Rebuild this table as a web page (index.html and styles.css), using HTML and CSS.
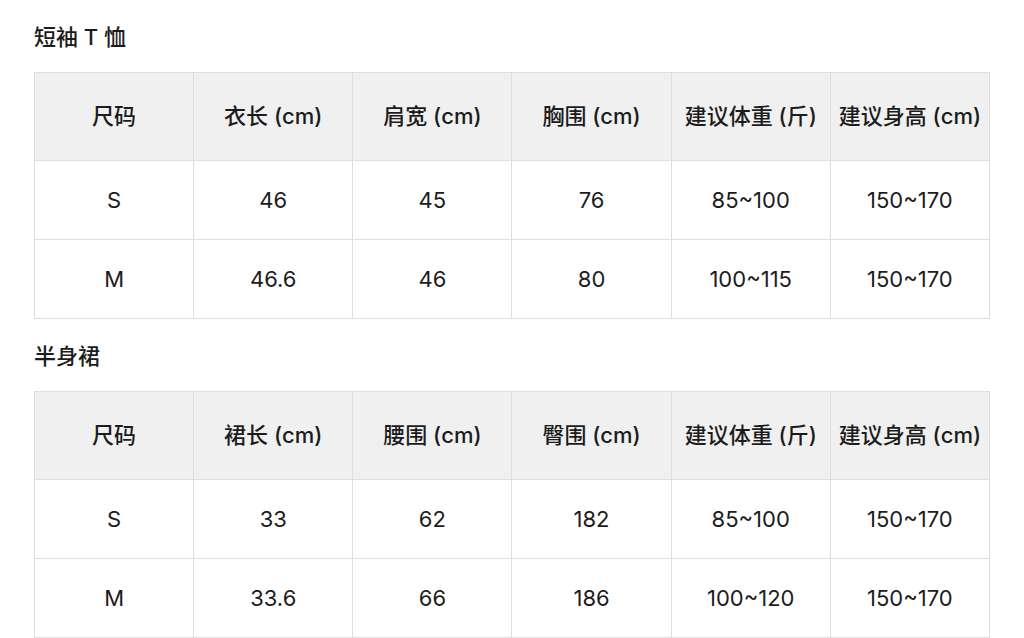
FILE: index.html
```html
<!DOCTYPE html>
<html lang="zh">
<head>
<meta charset="utf-8">
<link rel="stylesheet" href="styles.css">
</head>
<body>
<div class="page">
  <h2 class="title">短袖 T 恤</h2>
  <table class="size-table">
    <thead>
      <tr><th>尺码</th><th>衣长 (cm)</th><th>肩宽 (cm)</th><th>胸围 (cm)</th><th>建议体重 (斤)</th><th>建议身高 (cm)</th></tr>
    </thead>
    <tbody>
      <tr><td>S</td><td>46</td><td>45</td><td>76</td><td>85~100</td><td>150~170</td></tr>
      <tr><td>M</td><td>46.6</td><td>46</td><td>80</td><td>100~115</td><td>150~170</td></tr>
    </tbody>
  </table>
  <h2 class="title">半身裙</h2>
  <table class="size-table">
    <thead>
      <tr><th>尺码</th><th>裙长 (cm)</th><th>腰围 (cm)</th><th>臀围 (cm)</th><th>建议体重 (斤)</th><th>建议身高 (cm)</th></tr>
    </thead>
    <tbody>
      <tr><td>S</td><td>33</td><td>62</td><td>182</td><td>85~100</td><td>150~170</td></tr>
      <tr><td>M</td><td>33.6</td><td>66</td><td>186</td><td>100~120</td><td>150~170</td></tr>
    </tbody>
  </table>
</div>
</body>
</html>
```
FILE: styles.css
```css
html, body {
  margin: 0;
  padding: 0;
  background: #ffffff;
}
body {
  font-family: Inter, "Noto Sans CJK SC", sans-serif;
  color: #1c1c1c;
}
.page {
  padding: 0 34px;
  width: 956px;
}
.title {
  margin: 0;
  height: 72px;
  box-sizing: border-box;
  padding-bottom: 3px;
  display: flex;
  align-items: center;
  font-size: 22px;
  font-weight: 500;
  letter-spacing: 0;
}
.size-table {
  width: 956px;
  border-collapse: collapse;
  table-layout: fixed;
}
.size-table th,
.size-table td {
  border: 1px solid #dedede;
  text-align: center;
  font-size: 22px;
  padding: 0;
  letter-spacing: 0;
}
.size-table th {
  background: #f0f0f0;
  font-weight: 500;
  height: 88px;
  padding-bottom: 5px;
  box-sizing: border-box;
}
.size-table td {
  font-weight: 400;
  height: 79px;
  padding-bottom: 1px;
  box-sizing: border-box;
}
```
